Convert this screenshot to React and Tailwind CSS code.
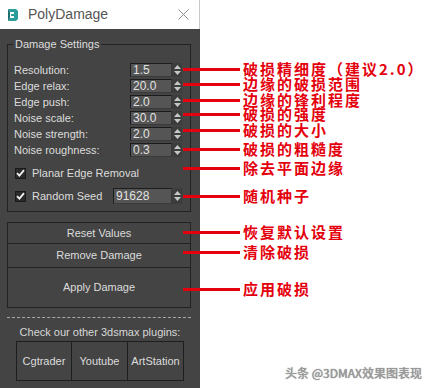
import React from "react";

const rows = [
  ["Resolution:", "1.5"],
  ["Edge relax:", "20.0"],
  ["Edge push:", "2.0"],
  ["Noise scale:", "30.0"],
  ["Noise strength:", "2.0"],
  ["Noise roughness:", "0.3"],
];

const notes = [
  [69, "破损精细度（建议2.0）"],
  [84, "边缘的破损范围"],
  [100, "边缘的锋利程度"],
  [114, "破损的强度"],
  [130, "破损的大小"],
  [149, "破损的粗糙度"],
  [168, "除去平面边缘"],
  [196, "随机种子"],
  [232, "恢复默认设置"],
  [252, "清除破损"],
  [289, "应用破损"],
];

function Spinner({ h = "h-[14px]" }) {
  return (
    <div className={`w-[10px] ${h} flex flex-col items-center justify-center gap-[2px] bg-[#3c3c3c]`}>
      <svg width="7" height="4" viewBox="0 0 7 4"><path d="M3.5 0L7 4H0z" fill="#c8c8c8" /></svg>
      <svg width="7" height="4" viewBox="0 0 7 4"><path d="M0 0H7L3.5 4z" fill="#c8c8c8" /></svg>
    </div>
  );
}

function Field({ value, w = "w-[42px]", h = "h-[14px]" }) {
  return (
    <div className="flex items-center">
      <div className={`${w} ${h} bg-[#555555] border border-[#1c1c1c] border-r-[#3a3a3a] border-b-[#3a3a3a] flex items-center pl-[2px] text-[#e2e2e2] text-[12px] leading-none`}>
        {value}
      </div>
      <Spinner h={h} />
    </div>
  );
}

function Check() {
  return (
    <div className="w-[11px] h-[11px] bg-[#2b2b2b] border border-[#1a1a1a] flex items-center justify-center">
      <svg width="9" height="8" viewBox="0 0 9 8">
        <path d="M1 4.2L3.4 6.6L8 1.2" stroke="#f0f0f0" strokeWidth="1.8" fill="none" />
      </svg>
    </div>
  );
}

export default function App() {
  return (
    <div className="relative w-[427px] h-[388px] bg-white overflow-hidden font-['Liberation_Sans',sans-serif]">
      <div className="w-[200px] h-[388px] flex flex-col">
        <div className="h-[29px] bg-white flex items-center pl-[7px] pr-[10px] border-r border-[#c8c8c8]">
          <svg width="12" height="14" viewBox="0 0 12 14">
            <path d="M1 1H9L11 3V11L9 13H1L3 10H7V8H4V6H7V4H3Z" fill="#2a9c9a" />
            <path d="M1 1L3 4V10L1 13Z" fill="#1d6f70" />
          </svg>
          <span className="ml-[9px] text-[14px] text-[#555555]">PolyDamage</span>
          <svg className="ml-auto" width="11" height="11" viewBox="0 0 11 11">
            <path d="M0.5 0.5L10.5 10.5M10.5 0.5L0.5 10.5" stroke="#8a8a8a" strokeWidth="1" />
          </svg>
        </div>
        <div className="flex-1 bg-[#444444] flex flex-col text-[11px] text-[#dcdcdc]">
          <fieldset className="ml-[7px] mt-[8px] w-[184px] border border-[#222222] pl-[6px] pr-[8px] pt-[11px] pb-[7px]">
            <legend className="ml-[-1px] px-[2px] leading-[14px] text-[11px]">Damage Settings</legend>
            {rows.map(([label, val]) => (
              <div key={label} className="h-[16px] flex items-center justify-between">
                <span className="text-[11px]">{label}</span>
                <Field value={val} />
              </div>
            ))}
            <div className="mt-[7px] h-[16px] flex items-center pl-[1px]">
              <Check />
              <span className="ml-[6px] text-[11px]">Planar Edge Removal</span>
            </div>
            <div className="mt-[7px] h-[16px] flex items-center pl-[1px]">
              <Check />
              <span className="ml-[6px] text-[11px]">Random Seed</span>
              <div className="ml-auto">
                <Field value="91628" w="w-[59px]" h="h-[16px]" />
              </div>
            </div>
          </fieldset>
          <div className="ml-[7px] mt-[10px] w-[184px] flex flex-col text-[11px]">
            <div className="h-[22px] border border-[#222222] flex items-center justify-center">Reset Values</div>
            <div className="h-[24px] border border-t-0 border-[#222222] flex items-center justify-center">Remove Damage</div>
            <div className="h-[40px] border border-t-0 border-[#222222] flex items-center justify-center">Apply Damage</div>
          </div>
          <div className="ml-[7px] mt-[9px] w-[184px] border-t border-dashed border-[#a8a8a8]" />
          <div className="mt-[7px] leading-[14px] text-center text-[11px] text-[#d8d8d8]">Check our other 3dsmax plugins:</div>
          <div className="mt-[2px] flex justify-center text-[11px]">
            <div className="w-[56px] h-[40px] border border-[#1e1e1e] flex items-center justify-center">Cgtrader</div>
            <div className="w-[56px] h-[40px] border border-l-0 border-[#1e1e1e] flex items-center justify-center">Youtube</div>
            <div className="w-[56px] h-[40px] border border-l-0 border-[#1e1e1e] flex items-center justify-center">ArtStation</div>
          </div>
        </div>
      </div>

      {notes.map(([y, t]) => (
        <div key={t} className="absolute left-[183px] h-[14px] flex items-center" style={{ top: y - 7 }}>
          <div className="w-[57px] h-[3px] bg-[#e4000c]" />
          <span className="ml-[3px] text-[15px] tracking-[2px] font-bold leading-[14px] text-[#e4000c] whitespace-nowrap font-['Noto_Sans_CJK_SC',sans-serif]">
            {t}
          </span>
        </div>
      ))}

      <div className="absolute left-[285px] top-[364px] text-[12px] text-[#9a9a9a] whitespace-nowrap font-['Noto_Sans_CJK_SC',sans-serif] [text-shadow:0_0_1px_#666]">
        头条 @3DMAX效果图表现
      </div>
    </div>
  );
}
